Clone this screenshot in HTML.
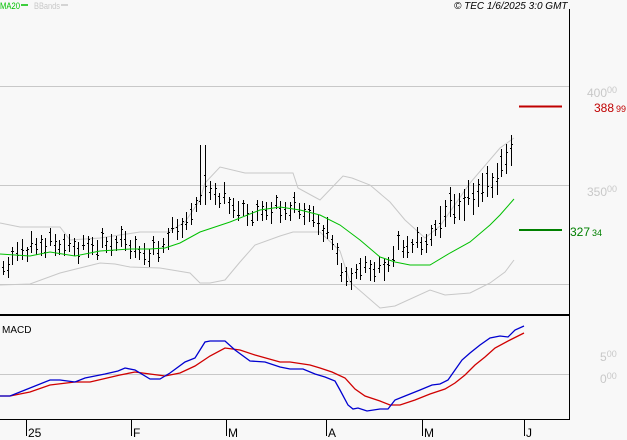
<!DOCTYPE html>
<html><head><meta charset="utf-8"><style>
html,body{margin:0;padding:0;background:#f8f8f8;width:627px;height:440px;overflow:hidden}
svg{display:block;font-family:"Liberation Sans",sans-serif}
</style></head><body>
<svg id="s" width="627" height="440" xmlns="http://www.w3.org/2000/svg">
<rect width="627" height="440" fill="#f8f8f8"/>
<line x1="0" y1="86.5" x2="569" y2="86.5" stroke="#c8c8c8"/>
<line x1="0" y1="185.5" x2="569" y2="185.5" stroke="#c8c8c8"/>
<line x1="0" y1="284.5" x2="569" y2="284.5" stroke="#c8c8c8"/>
<line x1="0" y1="374.5" x2="569" y2="374.5" stroke="#c8c8c8"/>
<line x1="569.5" y1="9" x2="569.5" y2="420" stroke="#000"/>
<line x1="0" y1="315" x2="570" y2="315" stroke="#000" stroke-width="2"/>
<line x1="0" y1="419.5" x2="570" y2="419.5" stroke="#000"/>
<g stroke="#000">
<line x1="26.5" y1="419" x2="26.5" y2="436"/><line x1="131.5" y1="419" x2="131.5" y2="436"/>
<line x1="226.5" y1="419" x2="226.5" y2="436"/><line x1="326.5" y1="419" x2="326.5" y2="436"/>
<line x1="422.5" y1="419" x2="422.5" y2="436"/><line x1="524.5" y1="419" x2="524.5" y2="436"/>
</g>
<g font-size="12" fill="#000">
<text x="28" y="437">25</text><text x="133" y="437">F</text><text x="228" y="437">M</text>
<text x="328" y="437">A</text><text x="424" y="437">M</text><text x="526" y="437">J</text>
</g>
<polyline fill="none" stroke="#c8c8c8" points="0,223 20,227 60,227 70,240 100,238 140,232 168,232 185,222 200,200 205,183 220,167 245,173 255,173 293,173 298,188 320,200 343,176 352,178 370,185 390,202 405,220 425,238 440,226 470,183 500,148 514,138"/>
<polyline fill="none" stroke="#c8c8c8" points="0,285 30,284 60,273 100,263 115,264 130,267 160,268 190,273 200,283 210,283 225,280 240,262 255,245 280,236 293,232 320,232 340,251 350,282 380,308 395,306 430,290 445,295 470,293 490,283 505,272 514,260"/>
<g id="bars" stroke="#000"></g>
<polyline fill="none" stroke="#00c000" points="0,254 30,256 50,252 75,256 100,251 130,249 150,249 165,248 180,243 200,232 230,222 260,210 280,207 300,210 320,215 340,225 360,240 380,257 395,262 410,265 430,265 450,253 470,242 490,225 500,215 514,199"/>
<polyline fill="none" stroke="#d00000" stroke-width="1.3" points="0,396 10,396 30,392 50,385 75,382 90,382 120,375 135,372 150,374 165,376 180,373 195,366 210,356 225,348 240,350 255,355 280,362 290,362 310,365 320,368 332,372 345,378 355,389 365,396 380,401 390,405 400,405 415,400 430,394 445,389 455,383 465,375 475,365 485,357 495,348 510,340 524,333"/>
<polyline fill="none" stroke="#0000d0" stroke-width="1.3" points="0,396 10,396 25,390 50,380 60,380 75,382 85,378 105,374 118,371 125,368 135,370 150,379 160,379 170,373 185,362 195,358 205,342 210,341 225,341 235,350 250,361 265,362 280,367 290,369 303,369 315,374 325,377 335,381 340,390 348,405 353,409 358,408 367,411 380,409 388,409 395,400 405,396 420,390 432,385 440,384 448,380 455,370 462,360 470,353 480,345 490,338 500,336 508,337 515,330 524,326"/>
<line x1="519" y1="106.5" x2="562" y2="106.5" stroke="#c00000" stroke-width="2"/>
<line x1="519" y1="230" x2="562" y2="230" stroke="#008000" stroke-width="2"/>
<text x="2" y="333" font-size="10" fill="#000">MACD</text>
<text x="0" y="9" font-size="9" fill="#00c000" textLength="20" lengthAdjust="spacingAndGlyphs">MA20</text>
<line x1="21" y1="5" x2="28" y2="5" stroke="#00c000" stroke-width="1.5"/>
<text x="34" y="9" font-size="9" fill="#c8c8c8" textLength="26" lengthAdjust="spacingAndGlyphs">BBands</text>
<line x1="61" y1="5" x2="68" y2="5" stroke="#c8c8c8" stroke-width="1.5"/>
<text x="454" y="9" font-size="10" font-style="italic" fill="#000">© TEC 1/6/2025 3:0 GMT</text>
<g font-size="12" fill="#c8c8c8">
<text x="587" y="97">400<tspan font-size="9" dy="-4">00</tspan></text>
<text x="587" y="196">350<tspan font-size="9" dy="-4">00</tspan></text>
<text x="600" y="361">5<tspan font-size="9" dy="-4">00</tspan></text>
<text x="600" y="383">0<tspan font-size="9" dy="-4">00</tspan></text>
</g>
<text x="594" y="112" font-size="12" fill="#c00000">388<tspan font-size="9" dx="2">99</tspan></text>
<text x="570" y="236" font-size="12" fill="#008000">327<tspan font-size="9" dx="2">34</tspan></text>
</svg>
<script>
var kp=[[3,268],[20,250],[50,243],[80,248],[110,243],[125,240],[140,255],[160,250],[170,232],[190,220],[203,185],[210,190],[225,200],[240,212],[255,215],[270,208],[280,210],[300,208],[320,225],[335,245],[345,285],[355,270],[370,268],[385,270],[395,248],[410,245],[430,240],[445,210],[460,205],[480,190],[495,180],[505,160],[513,145]];
function c(x){for(var i=1;i<kp.length;i++){if(x<=kp[i][0]){var a=kp[i-1],b=kp[i],t=(x-a[0])/(b[0]-a[0]);return a[1]+t*(b[1]-a[1]);}}return kp[kp.length-1][1];}
var g=document.getElementById('bars'),h='';
for(var i=0;i<110;i++){var x=Math.round(3+i*4.7);if(x>514)break;
var m=c(x)+4*Math.sin(i*1.7)+3*Math.sin(i*2.9);
var r=7+4*Math.abs(Math.sin(i*1.3));
var t=m-r,b=m+r;
if(x>=200&&x<=205){t=145;b=205;}
if(x>=440&&x<=516){r+=5;t=m-r;b=m+r;}
var o=m+r*0.5*Math.sin(i*2.3),cl=m+r*0.6*Math.cos(i*1.9);
h+='<line x1="'+(x+.5)+'" y1="'+t.toFixed(0)+'" x2="'+(x+.5)+'" y2="'+b.toFixed(0)+'"/>';
h+='<line x1="'+(x-1)+'" y1="'+(o.toFixed(0)-.5)+'" x2="'+x+'" y2="'+(o.toFixed(0)-.5)+'"/>';
h+='<line x1="'+(x+1)+'" y1="'+(cl.toFixed(0)-.5)+'" x2="'+(x+2)+'" y2="'+(cl.toFixed(0)-.5)+'"/>';}
g.innerHTML=h;
</script>
</body></html>
